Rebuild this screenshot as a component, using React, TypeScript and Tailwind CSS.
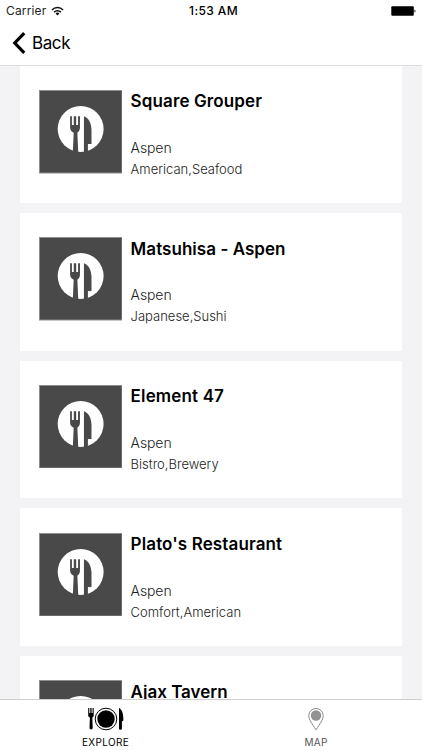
const restaurants = [
  { name: "Square Grouper", city: "Aspen", cuisine: "American,Seafood", nameSpacing: "tracking-[0.12px]" },
  { name: "Matsuhisa - Aspen", city: "Aspen", cuisine: "Japanese,Sushi", nameSpacing: "tracking-[0.05px]" },
  { name: "Element 47", city: "Aspen", cuisine: "Bistro,Brewery", nameSpacing: "tracking-[0.15px]" },
  { name: "Plato's Restaurant", city: "Aspen", cuisine: "Comfort,American", nameSpacing: "tracking-[0.12px]" },
  { name: "Ajax Tavern", nameSpacing: "tracking-[0px]" },
];

const PlaceholderIcon = () => (
  <svg viewBox="0 0 84 84" className="block h-[83.5px] w-[83.5px] shrink-0">
    <rect x="0.5" y="0.5" width="83" height="83" fill="#494949" stroke="#8d8d8d" />
    <circle cx="41.9" cy="39.2" r="23.1" fill="#fff" />
    {/* Fork */}
    <path
      fill="#494949"
      d="M31.3 26.4h1.8v8.7h1.9v-8.7h2.4v8.7h1.9v-8.7h1.9v11.4c0 2.8-1.1 4.3-2.6 5.2l.9 20.1h-5.5l.9-20.1c-2.3-.9-3.6-2.4-3.6-5.2z"
    />
    {/* Knife */}
    <path fill="#494949" d="M45.2 26.4c4.6 1.6 7.1 6 7.6 13v14.8h-3.6V63h-4z" />
  </svg>
);

const StatusBar = () => (
  <div className="flex h-[22px] items-center pl-[6px] pr-[6px] text-[#222]">
    <div className="flex w-[183px] items-center gap-[5px]">
      <span className="text-[12px] leading-[22px] tracking-[0.15px]">Carrier</span>
      <svg viewBox="0 0 14 10" className="h-[10px] w-[13px]" fill="none" stroke="#111" strokeWidth="1.6">
        <path d="M1 3.9a8.3 8.3 0 0 1 12 0M3.3 6.2a5.1 5.1 0 0 1 7.4 0" />
        <path d="M7 9.8 4.9 7.7a3 3 0 0 1 4.2 0z" fill="#111" stroke="none" />
      </svg>
    </div>
    <span className="text-[12px] font-medium leading-[22px] tracking-[0.4px] text-black">1:53 AM</span>
    <svg viewBox="0 0 25 10" className="ml-auto h-[10px] w-[25px]">
      <rect x="0.3" y="0.2" width="22.5" height="9.5" rx="1" />
      <path d="M23.5 3.5c1.3.5 1.3 2.5 0 3z" />
    </svg>
  </div>
);

const App = () => {
  return (
    <div className="flex h-[750px] w-[422px] flex-col overflow-hidden bg-[#f3f3f6] font-['Inter','Liberation_Sans',sans-serif] text-black">
      <header className="h-[66px] shrink-0 border-b border-[#dedee1] bg-white">
        <StatusBar />
        <button className="flex h-[42px] items-center gap-[6px] pl-[12px]">
          <svg viewBox="0 0 14 22" className="h-[22px] w-[14px]" fill="none" stroke="#000" strokeWidth="3.2">
            <path d="M12.2 1.2 2.8 11l9.4 9.8" />
          </svg>
          <span className="text-[17px] leading-[22px] tracking-[-0.4px]">Back</span>
        </button>
      </header>

      {/* Restaurant list */}
      <main className="flex min-h-0 flex-1 flex-col gap-[10px] overflow-hidden px-[20px]">
        {restaurants.map((item, index) => (
          <article
            key={item.name}
            className={`flex shrink-0 gap-[8.6px] bg-white pl-[18.5px] ${
              index === 0 ? 'h-[137px] pt-[24px]' : 'h-[137.6px] pt-[24.4px]'
            }`}
          >
            <PlaceholderIcon />
            <div className={index === 0 ? 'pt-0' : 'pt-[0.4px]'}>
              <h2 className={`whitespace-nowrap text-[17px] font-semibold leading-[22px] ${item.nameSpacing}`}>{item.name}</h2>
              {item.city && <p className="mt-[24.7px] text-[14px] font-light leading-[22px] tracking-[-0.1px] text-[#222]">{item.city}</p>}
              {item.cuisine && <p className="text-[13px] font-light leading-[21px] text-[#222]">{item.cuisine}</p>}
            </div>
          </article>
        ))}
      </main>

      <nav className="flex h-[51px] shrink-0 border-t border-[#cfcfcf] bg-white">
        <div className="flex w-[211px] flex-col items-center pt-[7px]">
          <svg viewBox="0 0 36 24" className="h-[24px] w-[36px]">
            <path d="M.2 1h1.1v5h1V1h1.3v5h1V1h1.1v7.2c0 1.2-.6 2-1.4 2.3l.4 10.6c0 1.8-3.2 1.8-3.2 0l.4-10.6C.9 10.1.2 9.4.2 8.2z" />
            <circle cx="18" cy="12" r="10.8" fill="none" stroke="#000" />
            <circle cx="18" cy="12" r="8.7" />
            <path d="M31 1c2.8 1.4 4.5 4.8 4.4 12.5l-1.5 1v7.2c0 1.4-2.9 1.4-2.9 0z" />
          </svg>
          <span className="mt-[4px] text-[10px] leading-[14px] tracking-[0.35px]">EXPLORE</span>
        </div>
        <div className="flex w-[210px] flex-col items-center pt-[7px] text-[#555]">
          <svg viewBox="0 0 16 24" className="h-[24px] w-[16px]">
            <path
              d="M8 1.5a7.1 7.1 0 0 0-7.2 7.1C.8 12.5 4.2 17.2 8 22.8c3.8-5.6 7.2-10.3 7.2-14.2A7.1 7.1 0 0 0 8 1.5z"
              fill="none"
              stroke="#8a8a8a"
            />
            <circle cx="8" cy="8.5" r="5.2" fill="#929292" />
          </svg>
          <span className="mt-[4px] text-[10px] leading-[14px] tracking-[0.3px]">MAP</span>
        </div>
      </nav>
    </div>
  );
};

export default App;
